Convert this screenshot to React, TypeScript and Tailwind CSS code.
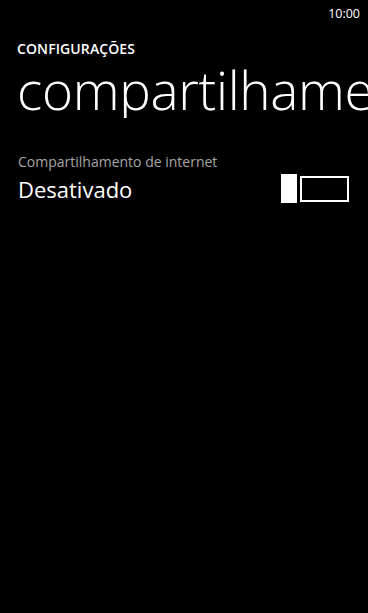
import React from "react";

const font = { fontFamily: '"Open Sans", "Noto Sans", sans-serif' };

export default function App() {
  return (
    <div className="w-[368px] h-[613px] bg-black text-white overflow-hidden" style={font}>
      {/* barra de status */}
      <div className="h-[28px] flex justify-end items-center pr-[8px]">
        <span className="text-[12.5px] leading-none">10:00</span>
      </div>

      {/* cabeçalho */}
      <div className="pl-[17px] pt-[14px]">
        <h2 className="text-[14px] font-semibold leading-none tracking-[0.1px]">CONFIGURAÇÕES</h2>
        <div className="overflow-hidden mt-[6px]">
          <h1 className="text-[53px] font-light leading-[56px] whitespace-nowrap tracking-[-0.3px]">
            compartilhamento
          </h1>
        </div>
      </div>

      {/* opção */}
      <div className="pl-[18px] pr-[19px] mt-[37px] flex items-end justify-between">
        <div>
          <p className="text-[14px] text-[#a6a6a6] leading-none">Compartilhamento de internet</p>
          <p className="text-[22px] leading-none mt-[9px]">Desativado</p>
        </div>
        <div className="flex items-center mb-[-3px]">
          <div className="w-[16px] h-[29px] bg-white" />
          <div className="w-[49px] h-[26px] border-2 border-white ml-[3px]" />
        </div>
      </div>
    </div>
  );
}
